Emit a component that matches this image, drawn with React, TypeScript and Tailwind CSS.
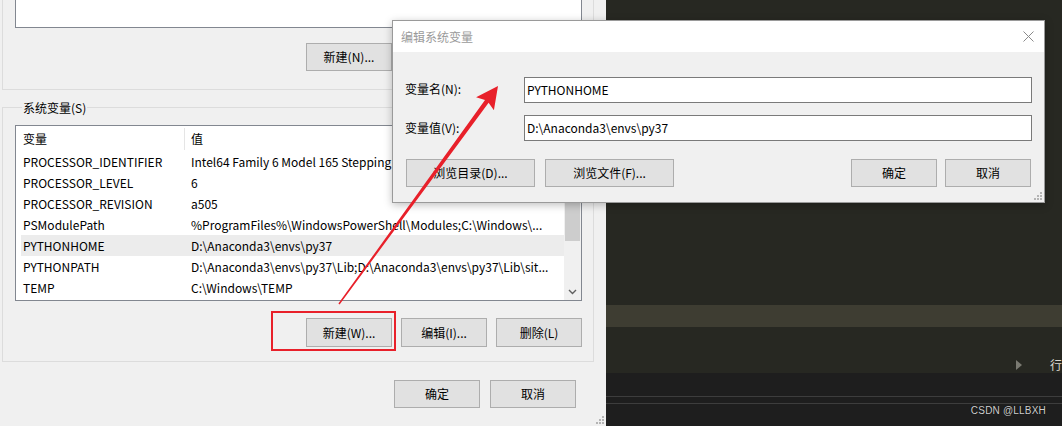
import React from "react";

const rows: [string, string][] = [
  ["PROCESSOR_IDENTIFIER", "Intel64 Family 6 Model 165 Stepping 5, GenuineIntel"],
  ["PROCESSOR_LEVEL", "6"],
  ["PROCESSOR_REVISION", "a505"],
  ["PSModulePath", "%ProgramFiles%\\WindowsPowerShell\\Modules;C:\\Windows\\..."],
  ["PYTHONHOME", "D:\\Anaconda3\\envs\\py37"],
  ["PYTHONPATH", "D:\\Anaconda3\\envs\\py37\\Lib;D:\\Anaconda3\\envs\\py37\\Lib\\sit..."],
  ["TEMP", "C:\\Windows\\TEMP"],
];

function Btn({ children, w = "w-[86px]", h = "h-[28px]" }: { children: React.ReactNode; w?: string; h?: string }) {
  return (
    <div className={`${w} ${h} shrink-0 bg-[#e1e1e1] border border-[#adadad] flex items-center justify-center text-[12px] text-black`}>
      {children}
    </div>
  );
}

function Grip() {
  return (
    <svg width="8" height="8" viewBox="0 0 8 8">
      <rect x="6" y="0" width="2" height="2" fill="#b4b4b4" />
      <rect x="3" y="3" width="2" height="2" fill="#b4b4b4" />
      <rect x="6" y="3" width="2" height="2" fill="#b4b4b4" />
      <rect x="0" y="6" width="2" height="2" fill="#b4b4b4" />
      <rect x="3" y="6" width="2" height="2" fill="#b4b4b4" />
      <rect x="6" y="6" width="2" height="2" fill="#b4b4b4" />
    </svg>
  );
}

function LeftWindow() {
  return (
    <div className="relative w-[606px] h-full shrink-0 bg-[#f0f0f0] flex flex-col">
      {/* user variables group (cut at top) */}
      <div className="ml-[2px] w-[592px] h-[90px] border-x border-b border-[#dcdcdc] pl-[12px] pr-[11px] flex flex-col">
        <div className="h-[28px] bg-white border-x border-b border-[#828790]" />
        <div className="flex justify-end gap-[9px] mt-[15px]">
          <Btn>新建(N)...</Btn>
          <Btn>编辑(E)...</Btn>
          <Btn>删除(D)</Btn>
        </div>
      </div>

      {/* system variables group */}
      <fieldset className="ml-[2px] mt-[9px] w-[592px] border border-[#dcdcdc] pl-[12px] pr-[11px] pt-[10px] pb-[14px]">
        <legend className="ml-[7px] px-[1px] text-[12px] leading-[16px] translate-y-[1px]">系统变量(S)</legend>
        <div className="h-[176px] bg-white border border-[#828790] flex">
          <div className="flex-1 flex flex-col overflow-hidden">
            <div className="h-[25px] flex items-center pl-[5px]">
              <div className="w-[163px] pl-[2px] text-[12px]">变量</div>
              <div className="w-px h-[22px] bg-[#e5e5e5]" />
              <div className="pl-[6px] text-[12px]">值</div>
            </div>
            {rows.map(([k, v]) => (
              <div
                key={k}
                className={`h-[21px] ml-[5px] flex items-center text-[12px] whitespace-nowrap ${k === "PYTHONHOME" ? "bg-[#ececec]" : ""}`}
              >
                <div className="w-[170px] pl-[2px] shrink-0">{k}</div>
                <div className="flex-1 overflow-hidden">{v}</div>
              </div>
            ))}
          </div>
          <div className="w-[17px] bg-[#f0f0f0] flex flex-col">
            <div className="h-[58px]" />
            <div className="h-[57px] mx-[1px] bg-[#cdcdcd]" />
            <div className="flex-1" />
            <div className="h-[17px] flex items-center justify-center">
              <svg width="9" height="6" viewBox="0 0 9 6">
                <path d="M1 1 L4.5 4.5 L8 1" stroke="#606060" strokeWidth="1.4" fill="none" />
              </svg>
            </div>
          </div>
        </div>
        <div className="flex justify-end gap-[9px] mt-[17px]">
          <Btn h="h-[29px]">新建(W)...</Btn>
          <Btn h="h-[29px]">编辑(I)...</Btn>
          <Btn h="h-[29px]">删除(L)</Btn>
        </div>
      </fieldset>

      <div className="flex justify-end gap-[10px] mt-[18px] pr-[30px]">
        <Btn w="w-[86px]">确定</Btn>
        <Btn w="w-[86px]">取消</Btn>
      </div>
      <div className="absolute right-[2px] bottom-[2px]">
        <Grip />
      </div>
    </div>
  );
}

function DarkPane() {
  return (
    <div className="flex-1 h-full flex flex-col overflow-hidden">
      <div className="h-[305px] bg-[#272822]" />
      <div className="h-[22px] bg-[#3e3d32]" />
      <div className="h-[46px] bg-[#272822] flex items-end">
        <div className="h-[16px] flex items-center pl-[410px] whitespace-nowrap">
          <svg width="6" height="10" viewBox="0 0 6 10">
            <path d="M0 0 L6 5 L0 10 Z" fill="#7a7a72" />
          </svg>
          <span className="ml-[28px] text-[12px] text-[#d8d8d0]">行 14，列 1</span>
        </div>
      </div>
      <div className="flex-1 bg-[#1e1e1e] flex flex-col">
        <div className="h-[23px]" />
        <div className="h-px bg-[#3d3d3d]" />
        <div className="h-[6px]" />
        <div className="h-px bg-[#3d3d3d]" />
        <div className="flex justify-end pr-[16px] pt-[1px]">
          <span className="text-[10px] leading-[12px] tracking-[0.2px] text-[#cfcfcf] font-['Liberation_Sans',sans-serif] [text-shadow:0_0_1px_#000]">
            CSDN @LLBXH
          </span>
        </div>
      </div>
    </div>
  );
}

function EditDialog() {
  return (
    <div className="absolute left-[392px] top-[20px] w-[653px] h-[183px] border border-[#9a9a9a] bg-[#f0f0f0] flex flex-col shadow-[0_2px_8px_rgba(0,0,0,0.25)]">
      <div className="h-[31px] bg-white flex items-center justify-between pl-[8px] pr-[10px]">
        <span className="text-[12px] text-[#9a9a9a]">编辑系统变量</span>
        <svg width="11" height="11" viewBox="0 0 11 11">
          <path d="M0.5 0.5 L10.5 10.5 M10.5 0.5 L0.5 10.5" stroke="#8a8a8a" strokeWidth="1" />
        </svg>
      </div>
      <div className="relative flex-1 flex flex-col pl-[12px] pr-[12px] pt-[25px]">
        <div className="flex items-center h-[26px]">
          <div className="w-[119px] text-[12px] -translate-y-[1px]">变量名(N):</div>
          <div className="flex-1 h-full bg-white border border-[#7a7a7a] flex items-center pl-[2px] text-[12px]">PYTHONHOME</div>
        </div>
        <div className="flex items-center h-[26px] mt-[12px]">
          <div className="w-[119px] text-[12px]">变量值(V):</div>
          <div className="flex-1 h-full bg-white border border-[#7a7a7a] flex items-center pl-[2px] text-[12px]">D:\Anaconda3\envs\py37</div>
        </div>
        <div className="flex items-center mt-[18px] pl-[1px] pr-[1px]">
          <Btn w="w-[129px]">浏览目录(D)...</Btn>
          <div className="w-[10px]" />
          <Btn w="w-[129px]">浏览文件(F)...</Btn>
          <div className="flex-1" />
          <Btn w="w-[86px]">确定</Btn>
          <div className="w-[8px]" />
          <Btn w="w-[86px]">取消</Btn>
        </div>
        <div className="absolute right-[2px] bottom-[2px]">
          <Grip />
        </div>
      </div>
    </div>
  );
}

function Annotation() {
  return (
    <svg className="absolute inset-0 pointer-events-none" width="1062" height="426" viewBox="0 0 1062 426">
      <rect x="272" y="312" width="123" height="38" fill="none" stroke="#e8202a" strokeWidth="2" />
      <polygon
        points="338.4,303.6 485.0,100.1 476.1,97.3 498,86 493.9,110.3 488.6,102.7 339.6,304.4"
        fill="#e8202a"
      />
    </svg>
  );
}

export default function App() {
  return (
    <div className="relative w-[1062px] h-[426px] overflow-hidden flex text-black font-['Noto_Sans_CJK_SC',sans-serif] text-[12px]">
      <LeftWindow />
      <DarkPane />
      <EditDialog />
      <Annotation />
    </div>
  );
}
